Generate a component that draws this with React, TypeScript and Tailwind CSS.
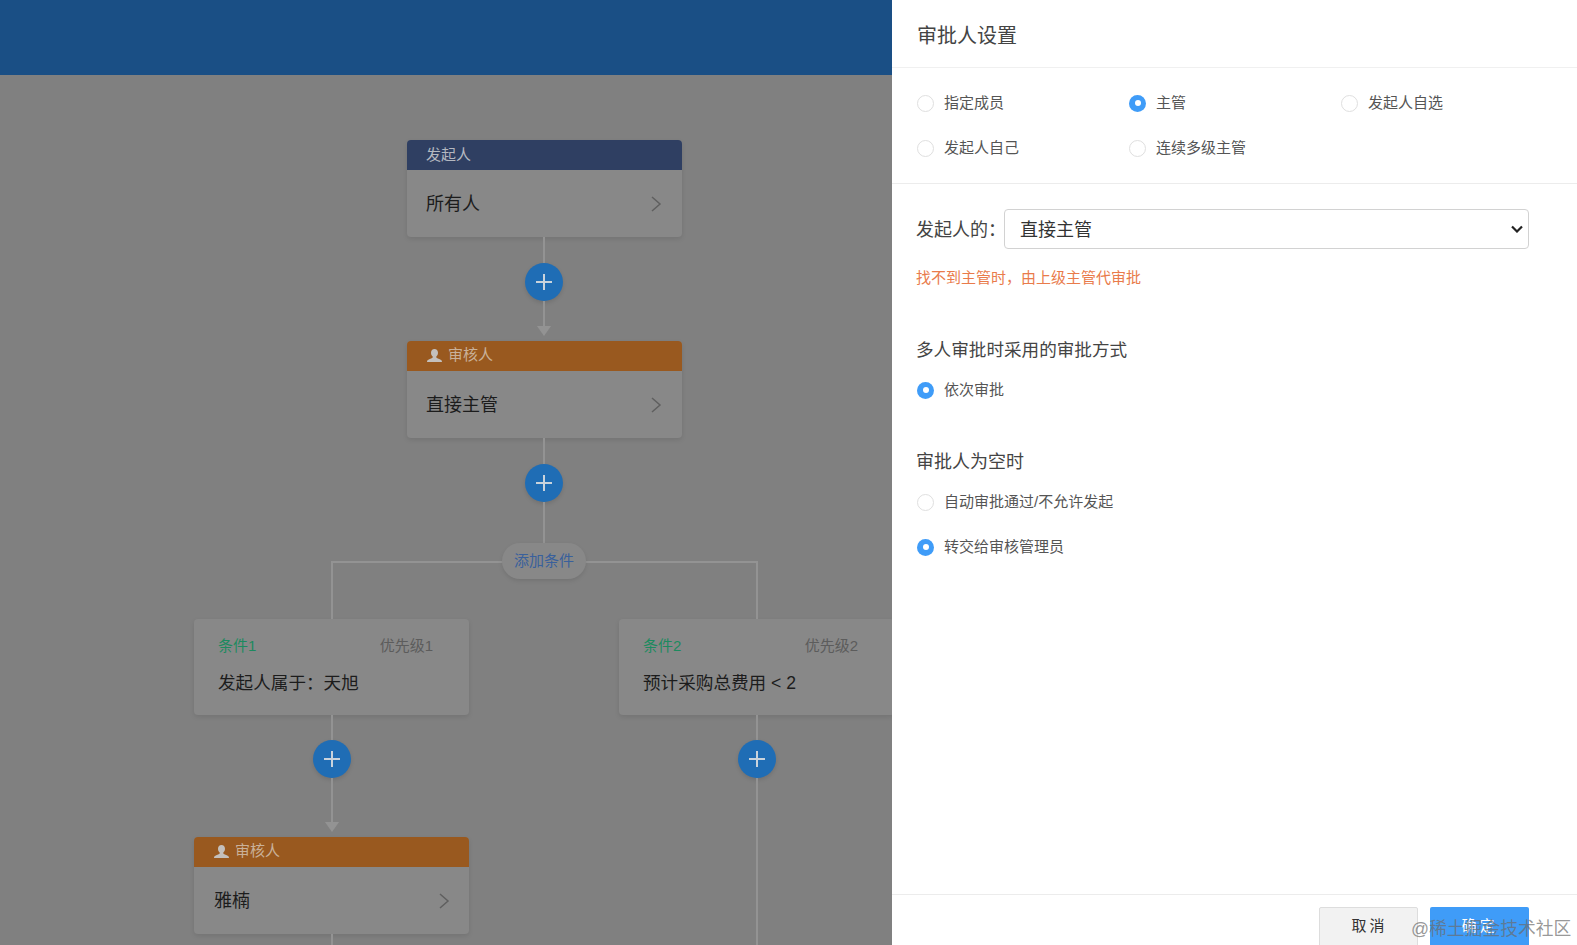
import React from "react";

function Plus() {
  return (
    <div className="flex h-[38px] w-[38px] shrink-0 items-center justify-center rounded-full bg-[#1f6db5] shadow-[0_2px_4px_rgba(0,0,0,0.12)]">
      <svg width="20" height="20" viewBox="0 0 20 20" fill="none" stroke="#c9d3dc" strokeWidth="2">
        <path d="M10 2v16M2 10h16" />
      </svg>
    </div>
  );
}

function Line({ h }: { h: string }) {
  return <div className={`w-[2px] shrink-0 bg-[#939393] ${h}`} />;
}

function Arrow() {
  return (
    <svg width="14" height="10" viewBox="0 0 14 10" className="shrink-0">
      <path d="M0 0h14L7 10z" fill="#939393" />
    </svg>
  );
}

function Chevron() {
  return (
    <svg width="11" height="18" viewBox="0 0 11 18" fill="none" stroke="#5f5f5f" strokeWidth="1.5" className="shrink-0">
      <path d="M1 2l8 7-8 7" />
    </svg>
  );
}

function Person() {
  return (
    <svg width="15" height="14" viewBox="0 0 15 14" fill="#c4c0bc" className="shrink-0">
      <path d="M7.5 0C9.6 0 11 1.6 11 3.8c0 1.6-.7 3-1.7 3.8v1c.4.6 2.6 1.2 4 2 .9.5 1.7 1 1.7 2.4H0c0-1.400.8-1.900 1.700-2.400 1.400-.8 3.600-1.400 4-2v-1C4.700 6.800 4 5.400 4 3.800 4 1.600 5.400 0 7.500 0z" />
    </svg>
  );
}

function NodeCard({
  title,
  body,
  tone,
  icon,
  top,
}: {
  title: string;
  body: string;
  tone: "navy" | "orange";
  icon?: boolean;
  top?: boolean;
}) {
  return (
    <div
      className={
        top
          ? "ml-[1px] w-[275px] shrink-0 overflow-hidden rounded-[4px] bg-[#888888] shadow-[0_2px_5px_rgba(0,0,0,0.1)]"
          : "w-[275px] shrink-0 self-start overflow-hidden rounded-[4px] bg-[#888888] shadow-[0_2px_5px_rgba(0,0,0,0.1)]"
      }
    >
      <div
        className={
          tone === "navy"
            ? "flex h-[30px] items-center gap-[6px] bg-[#2f3f62] pl-[19px] text-[15px] text-[#b4b8c0]"
            : "flex h-[30px] items-center gap-[6px] bg-[#99591f] pb-[1px] pl-[20px] text-[15px] text-[#c9b199]"
        }
      >
        {icon && <Person />}
        <span>{title}</span>
      </div>
      <div
        className={
          top
            ? "flex h-[67px] items-center justify-between pl-[19px] pr-[20px] pt-[1px] text-[18px] text-[#1c1c1c]"
            : "flex h-[67px] items-center justify-between pl-[20px] pr-[19px] pt-[1px] text-[18px] text-[#1c1c1c]"
        }
      >
        <span>{body}</span>
        <Chevron />
      </div>
    </div>
  );
}

function CondCard({ n, priority, body }: { n: number; priority: number; body: string }) {
  return (
    <div className="h-[96px] w-[275px] shrink-0 self-start rounded-[4px] bg-[#888888] pl-[24px] pr-[36px] pt-[16px] shadow-[0_2px_5px_rgba(0,0,0,0.1)]">
      <div className="flex h-[22px] items-center justify-between text-[15px]">
        <span className="text-[#1d8a5f]">条件{n}</span>
        <span className="text-[#5c5c5c]">优先级{priority}</span>
      </div>
      <div className="mt-[13px] text-[17.6px] leading-[26px] text-[#1c1c1c]">{body}</div>
    </div>
  );
}

function Radio({ label, checked }: { label: string; checked?: boolean }) {
  return (
    <div className="flex h-[18px] items-center gap-[10px] text-[15px] text-[#555555]">
      {checked ? (
        <span className="flex h-[17px] w-[17px] shrink-0 items-center justify-center rounded-full bg-[#3f9cf8]">
          <span className="h-[6px] w-[6px] rounded-full bg-white" />
        </span>
      ) : (
        <span className="h-[17px] w-[17px] shrink-0 rounded-full border border-[#dfdfdf] bg-white" />
      )}
      <span>{label}</span>
    </div>
  );
}

export default function App() {
  return (
    <div className="relative flex h-screen w-full overflow-hidden bg-white font-['Liberation_Sans','Noto_Sans_CJK_SC',sans-serif]">
      {/* Dimmed canvas */}
      <div className="flex h-full w-[892px] shrink-0 flex-col overflow-hidden bg-[#808080]">
        <div className="h-[75px] shrink-0 bg-[#1a4f85]" />
        <div className="ml-[194px] flex w-[700px] shrink-0 flex-col items-center pt-[65px]">
          <NodeCard title="发起人" body="所有人" tone="navy" top />
          <Line h="h-[26px]" />
          <Plus />
          <Line h="h-[25px]" />
          <Arrow />
          <div className="h-[5px] shrink-0" />
          <NodeCard title="审核人" body="直接主管" tone="orange" icon top />
          <Line h="h-[26px]" />
          <Plus />
          <Line h="h-[59px]" />
          {/* Branch connector */}
          <div className="relative ml-[137px] h-[58px] w-[427px] shrink-0 self-start border-x-2 border-t-2 border-[#939393]">
            <div className="absolute left-[169px] top-[-20px] flex h-[36px] w-[84px] items-center justify-center rounded-[18px] bg-[#888888] text-[15px] text-[#39609c] shadow-[0_2px_4px_rgba(0,0,0,0.1)]">
              添加条件
            </div>
          </div>
          <div className="flex w-[701px] shrink-0 gap-[149px] self-start">
            <div className="flex w-[276px] shrink-0 flex-col items-center">
              <CondCard n={1} priority={1} body="发起人属于：天旭" />
              <Line h="h-[25px]" />
              <Plus />
              <Line h="h-[44px]" />
              <Arrow />
              <div className="h-[5px] shrink-0" />
              <NodeCard title="审核人" body="雅楠" tone="orange" icon />
              <Line h="h-[30px]" />
            </div>
            <div className="flex w-[276px] shrink-0 flex-col items-center">
              <CondCard n={2} priority={2} body="预计采购总费用 < 2" />
              <Line h="h-[25px]" />
              <Plus />
              <Line h="h-[220px]" />
            </div>
          </div>
        </div>
      </div>

      {/* Drawer */}
      <div className="flex h-full min-w-0 flex-1 flex-col bg-white">
        <div className="flex h-[68px] shrink-0 items-center border-b border-[#f0f0f0] pl-[25px] pt-[5px] text-[20px] text-[#444444]">
          审批人设置
        </div>
        <div className="grid h-[116px] shrink-0 grid-cols-[212px_212px_212px] content-start gap-y-[27px] border-b border-[#ececec] pl-[25px] pt-[26px]">
          <Radio label="指定成员" />
          <Radio label="主管" checked />
          <Radio label="发起人自选" />
          <Radio label="发起人自己" />
          <Radio label="连续多级主管" />
        </div>
        <div className="flex flex-1 flex-col pl-[24px] pt-[25px]">
          <div className="flex items-center">
            <span className="w-[88px] shrink-0 whitespace-nowrap pt-[2px] text-[18px] text-[#444444]">发起人的：</span>
            <div className="relative w-[525px]">
              <select
                defaultValue="直接主管"
                className="h-[40px] w-full appearance-none rounded-[4px] border border-[#d2d2d2] bg-white pl-[15px] pr-[8px] pt-[2px] text-[18px] text-[#333333]"
              >
                <option>直接主管</option>
              </select>
              <svg
                width="12"
                height="8"
                viewBox="0 0 12 8"
                fill="none"
                stroke="#222222"
                strokeWidth="2.2"
                className="pointer-events-none absolute right-[6px] top-[16px]"
              >
                <path d="M1 1.500l5 5 5-5" />
              </svg>
            </div>
          </div>
          <div className="mt-[19px] text-[15px] leading-[20px] text-[#e97b4b]">找不到主管时，由上级主管代审批</div>
          <div className="mt-[49px] text-[17.600px] leading-[26px] text-[#444444]">多人审批时采用的审批方式</div>
          <div className="mt-[18px] pl-[1px]">
            <Radio label="依次审批" checked />
          </div>
          <div className="mt-[50px] text-[18px] leading-[26px] text-[#444444]">审批人为空时</div>
          <div className="mt-[18px] pl-[1px]">
            <Radio label="自动审批通过/不允许发起" />
          </div>
          <div className="mt-[27px] pl-[1px]">
            <Radio label="转交给审核管理员" checked />
          </div>
        </div>
        <div className="flex h-[51px] shrink-0 justify-end gap-[12px] border-t border-[#ececec] pr-[48px] pt-[12px]">
          <button className="h-[40px] w-[99px] rounded-[2px] border border-[#dddddd] bg-[#f2f2f2] pb-[2px] pl-[2px] text-[15px] tracking-[3px] text-[#333333]">
            取消
          </button>
          <button className="h-[40px] w-[99px] rounded-[2px] bg-[#3f9cf8] pb-[2px] text-[15px] tracking-[3px] text-white">
            确定
          </button>
        </div>
      </div>

      {/* Watermark */}
      <div className="absolute left-[1411px] top-[917px] whitespace-nowrap text-[17.800px] leading-[24px] text-[#6b6b6b]/70">
        @稀土掘金技术社区
      </div>
    </div>
  );
}
